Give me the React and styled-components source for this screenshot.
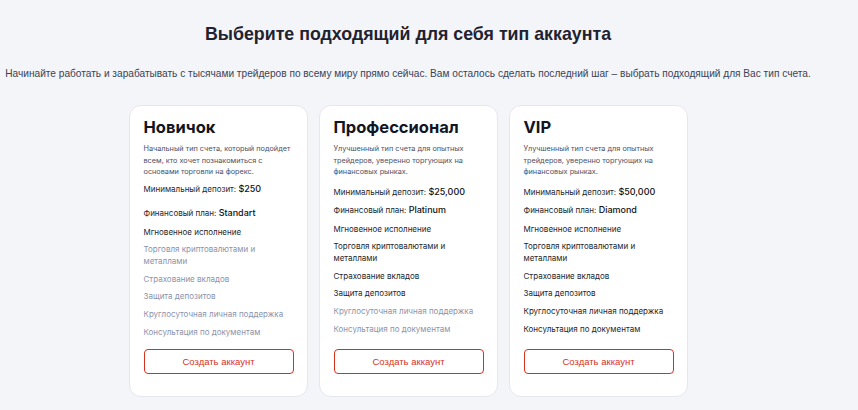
import styled, { createGlobalStyle } from 'styled-components';

const GlobalStyle = createGlobalStyle`
  html, body {
    margin: 0;
    padding: 0;
    background: #f4f5f9;
  }
  body {
    font-family: Inter, "Noto Sans", sans-serif;
    color: #1c2030;
  }
`;

const plans = [
  {
    name: 'Новичок',
    text: 'Начальный тип счета, который подойдет всем, кто хочет познакомиться с основами торговли на форекс.',
    deposit: '$250',
    plan: 'Standart',
    active: 1,
    loose: true,
  },
  {
    name: 'Профессионал',
    text: 'Улучшенный тип счета для опытных трейдеров, уверенно торгующих на финансовых рынках.',
    deposit: '$25,000',
    plan: 'Platinum',
    active: 4,
  },
  {
    name: 'VIP',
    text: 'Улучшенный тип счета для опытных трейдеров, уверенно торгующих на финансовых рынках.',
    deposit: '$50,000',
    plan: 'Diamond',
    active: 6,
  },
];

const features = [
  'Мгновенное исполнение',
  'Торговля криптовалютами и металлами',
  'Страхование вкладов',
  'Защита депозитов',
  'Круглосуточная личная поддержка',
  'Консультация по документам',
];

const Page = styled.div`
  width: 816px;
  padding-top: 23px;
  text-align: center;
`;

const Heading = styled.h1`
  margin: 0;
  font-family: "Liberation Sans", Arial, sans-serif;
  font-size: 17.8px;
  line-height: 22px;
  font-weight: 700;
  color: #1f2230;
`;

const Lead = styled.p`
  margin: 22px 0 0;
  font-family: "Liberation Sans", Arial, sans-serif;
  font-size: 10.15px;
  line-height: 14px;
  color: #3b4256;
  white-space: nowrap;
`;

const Cards = styled.div`
  display: flex;
  justify-content: center;
  gap: 11px;
  margin-top: 24px;
  text-align: left;
`;

const Card = styled.div`
  width: 179px;
  height: 292px;
  box-sizing: border-box;
  background: #fff;
  border: 1px solid #e4e7ee;
  border-radius: 12px;
  padding: 9px 14px 0;
  display: flex;
  flex-direction: column;
`;

const Name = styled.h2`
  margin: 0;
  font-size: 16.5px;
  line-height: 24px;
  font-weight: 700;
  color: #121522;
`;

const Description = styled.p`
  margin: 4px 0 0;
  font-size: 7.3px;
  line-height: 11.6px;
  color: #4a5068;
`;

const Info = styled.div`
  margin-top: ${(p) => p.$gap}px;
  font-size: 8px;
  line-height: 11px;
  color: #1c1f2c;

  b {
    font-weight: 500;
    font-size: 9px;
    color: #111;
  }
`;

const Features = styled.ul`
  list-style: none;
  margin: 8px 0 0;
  padding: 0;
  display: flex;
  flex-direction: column;
  gap: 6.2px;
`;

const Feature = styled.li`
  font-size: 8px;
  line-height: 11.5px;
  color: ${(p) => (p.$on ? '#1c1f2c' : '#8b93ab')};
  padding-right: 8px;
`;

const Button = styled.button`
  margin-top: auto;
  margin-bottom: 22px;
  width: 150px;
  height: 25px;
  box-sizing: border-box;
  border: 1px solid #d4321f;
  border-radius: 4px;
  background: #fff;
  color: #d4321f;
  font-family: "Liberation Sans", Arial, sans-serif;
  font-size: 9.5px;
  cursor: pointer;
`;

export default function App() {
  return (
    <>
      <GlobalStyle />
      <Page>
        <Heading>Выберите подходящий для себя тип аккаунта</Heading>
        <Lead>
          Начинайте работать и зарабатывать с тысячами трейдеров по всему миру прямо сейчас. Вам осталось сделать
          последний шаг – выбрать подходящий для Вас тип счета.
        </Lead>
        <Cards>
          {plans.map((p) => (
            <Card key={p.name}>
              <Name>{p.name}</Name>
              <Description>{p.text}</Description>
              <Info $gap={p.loose ? 5 : 8}>
                Минимальный депозит: <b>{p.deposit}</b>
              </Info>
              <Info $gap={p.loose ? 12 : 6}>
                Финансовый план: <b>{p.plan}</b>
              </Info>
              <Features>
                {features.map((f, i) => (
                  <Feature key={f} $on={i < p.active}>
                    {f}
                  </Feature>
                ))}
              </Features>
              <Button>Создать аккаунт</Button>
            </Card>
          ))}
        </Cards>
      </Page>
    </>
  );
}
